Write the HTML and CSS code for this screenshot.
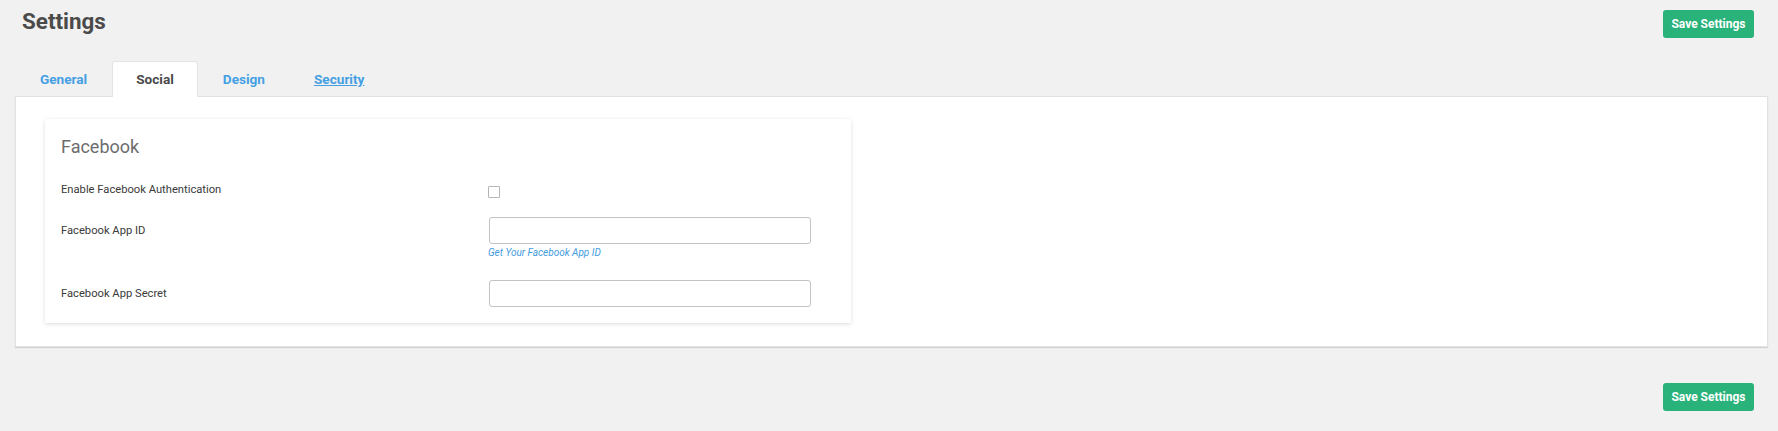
FILE: index.html
```html
<!DOCTYPE html>
<html lang="en">
<head>
<meta charset="utf-8">
<title>Settings</title>
<link rel="stylesheet" href="styles.css">
</head>
<body>
<div class="page">
  <header class="top">
    <h1 class="title">Settings</h1>
    <button class="save" type="button">Save Settings</button>
  </header>

  <nav class="tabs">
    <a class="tab" href="#">General</a>
    <a class="tab active" href="#">Social</a>
    <a class="tab" href="#">Design</a>
    <a class="tab underline" href="#">Security</a>
  </nav>

  <section class="panel">
    <div class="card">
      <h2 class="card-title">Facebook</h2>

      <div class="field field-check">
        <label class="label" for="fb-enable">Enable Facebook Authentication</label>
        <input class="check" id="fb-enable" type="checkbox">
      </div>

      <div class="field field-id">
        <label class="label" for="fb-id">Facebook App ID</label>
        <input class="text" id="fb-id" type="text">
        <a class="help" href="#">Get Your Facebook App ID</a>
      </div>

      <div class="field field-secret">
        <label class="label" for="fb-secret">Facebook App Secret</label>
        <input class="text" id="fb-secret" type="text">
      </div>
    </div>
  </section>

  <footer class="bottom">
    <button class="save" type="button">Save Settings</button>
  </footer>
</div>
</body>
</html>
```

FILE: styles.css
```css
* { box-sizing: border-box; }

html, body {
  margin: 0;
  padding: 0;
  background: #f1f1f1;
  font-family: Roboto, "Liberation Sans", Arial, sans-serif;
}

.page {
  padding: 0 10px 0 15px;
}

.top {
  display: flex;
  justify-content: space-between;
  align-items: flex-start;
  padding: 7px 14px 0 7px;
}

.title {
  margin: 0;
  font-size: 22.4px;
  line-height: 28px;
  font-weight: 700;
  color: #4a4a4a;
}

.save {
  margin-top: 3px;
  width: 91px;
  height: 28px;
  padding: 0;
  border: none;
  border-radius: 3px;
  background: #2ab27b;
  color: #fff;
  font-family: Roboto, "Liberation Sans", Arial, sans-serif;
  font-size: 12px;
  font-weight: 700;
  cursor: pointer;
}

.tabs {
  display: flex;
  gap: 1px;
  margin-top: 23px;
  padding-left: 1px;
  position: relative;
  z-index: 1;
}

.tab {
  display: block;
  height: 35px;
  padding: 0 23px;
  line-height: 35px;
  font-size: 13.6px;
  font-weight: 700;
  color: #45a0e3;
  text-decoration: none;
  border: 1px solid transparent;
  border-bottom: none;
  border-radius: 3px 3px 0 0;
  margin-bottom: -1px;
}

.tab.active {
  background: #fff;
  color: #4a4a4a;
  border-color: #e4e4e4;
  height: 36px;
}

.tab.underline {
  text-decoration: underline;
}

.panel {
  background: #fff;
  border: 1px solid #e2e2e2;
  box-shadow: 0 1px 1px rgba(0, 0, 0, 0.12);
  padding: 22px 29px 23px 29px;
}

.card {
  width: 806px;
  background: #fff;
  box-shadow: 0 1px 4px rgba(0, 0, 0, 0.14);
  border-radius: 2px;
  padding: 17px 40px 16px 16px;
}

.card-title {
  margin: 0;
  font-size: 18px;
  line-height: 22px;
  font-weight: 400;
  color: #6d6d6d;
}

.field {
  display: grid;
  grid-template-columns: 427px 322px;
  align-items: start;
}

.label {
  font-size: 11.2px;
  font-weight: 400;
  color: #3a3a3a;
  line-height: 27px;
}

.field-check {
  margin-top: 25px;
}

.field-check .label {
  line-height: 13px;
}

.check {
  appearance: none;
  -webkit-appearance: none;
  margin: 3px 0 0 0;
  width: 12px;
  height: 12px;
  border: 1px solid #b5b5b5;
  border-radius: 1px;
  background: #fff;
}

.field-id {
  margin-top: 19px;
}

.field-secret {
  margin-top: 21px;
}

.text {
  margin: 0 0 0 1px;
  width: 322px;
  height: 27px;
  border: 1px solid #c3c3c3;
  border-radius: 3px;
  background: #fff;
  font-family: inherit;
  font-size: 12px;
  padding: 0 6px;
}

.help {
  grid-column: 2;
  margin-top: 3px;
  font-size: 10px;
  line-height: 12px;
  font-style: italic;
  color: #3f9be0;
  text-decoration: none;
}

.bottom {
  display: flex;
  justify-content: flex-end;
  padding: 33px 14px 21px 0;
}
```
